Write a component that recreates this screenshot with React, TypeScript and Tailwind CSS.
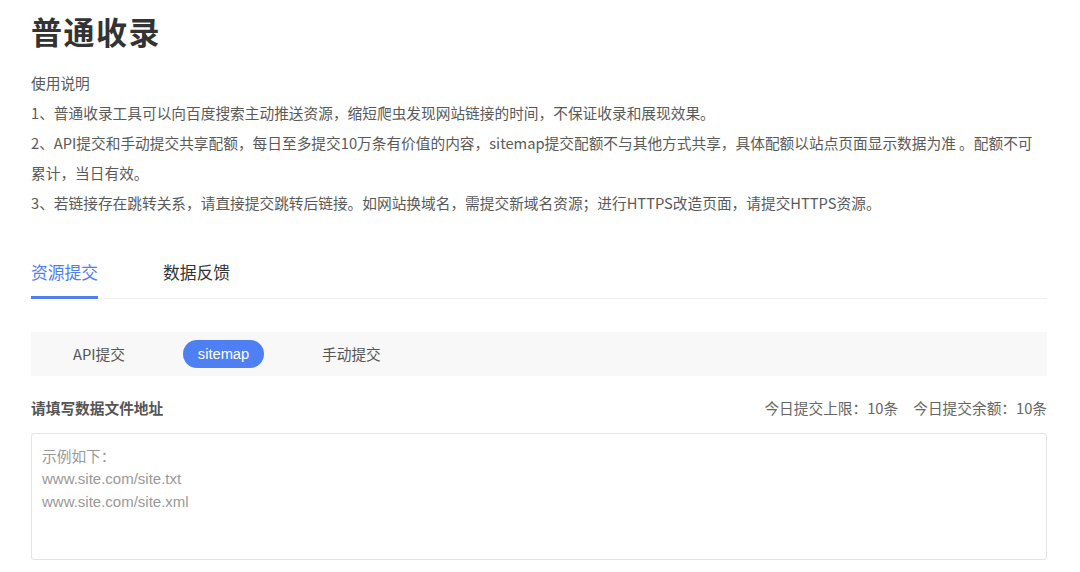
import React from "react";

const font = { fontFamily: '"Noto Sans CJK SC", "Liberation Sans", sans-serif' };
const latin = { fontFamily: '"Liberation Sans", "Noto Sans CJK SC", sans-serif' };

export default function App() {
  return (
    <div className="w-[1080px] h-[572px] bg-white overflow-hidden" style={font}>
      <div className="pl-[31px] pr-[33px]">
        <h1 className="pt-[10px] text-[31px] leading-[42px] font-bold text-[#333] tracking-[1.5px]">普通收录</h1>
        <div className="mt-[16px] text-[14.7px] leading-[30px] text-[#5a5a5a]">
          <p>使用说明</p>
          <p>1、普通收录工具可以向百度搜索主动推送资源，缩短爬虫发现网站链接的时间，不保证收录和展现效果。</p>
          <p>
            2、API提交和手动提交共享配额，每日至多提交10万条有价值的内容，sitemap提交配额不与其他方式共享，具体配额以站点页面显示数据为准 。配额不可
            <br />
            累计，当日有效。
          </p>
          <p>3、若链接存在跳转关系，请直接提交跳转后链接。如网站换域名，需提交新域名资源；进行HTTPS改造页面，请提交HTTPS资源。</p>
        </div>
        <div className="mt-[42px] flex border-b border-[#eeeeee]">
          <div className="w-[67px] pb-[12px] border-b-[3px] border-[#4f7ef0] text-[#4f7ef0] text-[16.8px] leading-[24px] whitespace-nowrap -mb-px">资源提交</div>
          <div className="ml-[65px] pb-[12px] text-[#333] text-[16.8px] leading-[24px] whitespace-nowrap">数据反馈</div>
        </div>
        <div className="mt-[33px] h-[44px] bg-[#f8f8f8] flex items-center text-[14.7px] text-[#555]">
          <div className="ml-[42px] w-[53px] whitespace-nowrap">API提交</div>
          <div className="ml-[57px] w-[81px] h-[28px] rounded-full bg-[#4f80f3] text-white flex items-center justify-center" style={latin}>sitemap</div>
          <div className="ml-[58px] whitespace-nowrap">手动提交</div>
        </div>
        <div className="mt-[20px] flex justify-between items-center text-[14.7px] leading-[24px]">
          <div className="font-bold text-[#555]">请填写数据文件地址</div>
          <div className="flex gap-[15px] text-[#666]">
            <span>今日提交上限：10条</span>
            <span>今日提交余额：10条</span>
          </div>
        </div>
        <div className="mt-[13px] h-[127px] border border-[#e3e3e3] rounded-[3px] px-[10px] pt-[10px] text-[14.7px] leading-[23px] text-[#999]">
          <div>示例如下：</div>
          <div className="text-[15px]" style={latin}>www.site.com/site.txt</div>
          <div className="text-[15px]" style={latin}>www.site.com/site.xml</div>
        </div>
      </div>
    </div>
  );
}
